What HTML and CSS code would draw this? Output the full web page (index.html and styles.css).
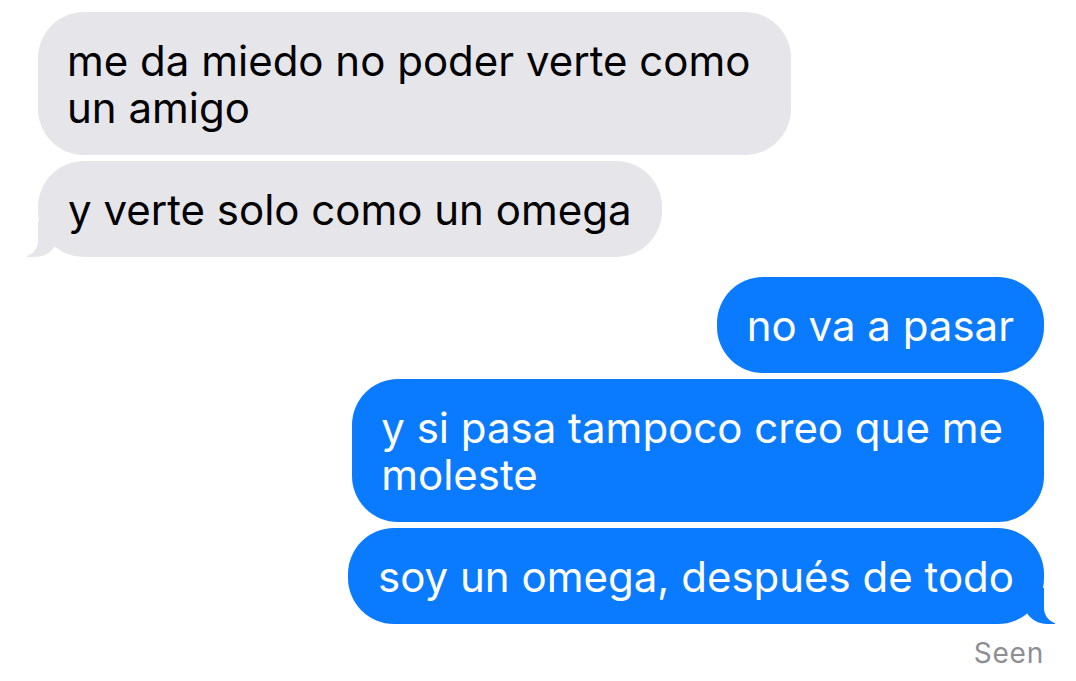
FILE: index.html
```html
<!DOCTYPE html>
<html lang="es">
<head>
  <meta charset="UTF-8" />
  <meta name="viewport" content="width=device-width, initial-scale=1.0" />
  <title>Mensajes</title>
  <link rel="stylesheet" href="styles.css">
</head>
<body>
  <div class="chat">
    <div class="group them">
      <div class="bubble wrapped">me da miedo no poder verte como<br>un amigo</div>
      <div class="bubble tail">y verte solo como un omega</div>
    </div>

    <div class="group me">
      <div class="bubble">no va a pasar</div>
      <div class="bubble wrapped">y si pasa tampoco creo que me<br>moleste</div>
      <div class="bubble tail">soy un omega, después de todo</div>
      <div class="seen">Seen</div>
    </div>
  </div>
</body>
</html>
```

FILE: styles.css
```css
* {
  box-sizing: border-box;
}

body {
  margin: 0;
  background: #fff;
  font-family: Inter, 'Noto Sans', sans-serif;
}

.chat {
  display: flex;
  flex-direction: column;
  gap: 20px;
  padding: 12px 32px 0 38px;
}

.group {
  display: flex;
  flex-direction: column;
  gap: 6px;
}

.them {
  align-items: flex-start;
}

.me {
  align-items: flex-end;
}

.bubble {
  position: relative;
  padding: 25px 30px 24px;
  font-size: 42px;
  line-height: 47px;
  border-radius: 46px;
  white-space: nowrap;
}

.bubble.wrapped {
  padding-left: 29px;
  padding-right: 41px;
}

.them .bubble {
  background: #e5e5ea;
  color: #000;
}

.me .bubble {
  background: #0a7bff;
  color: #fff;
}

/* iMessage style tail */
.bubble.tail::before,
.bubble.tail::after {
  content: '';
  position: absolute;
  bottom: 0;
  height: 36px;
}

.them .bubble.tail::before {
  left: -11px;
  width: 32px;
  background: #e5e5ea;
  border-bottom-right-radius: 24px;
}

.them .bubble.tail::after {
  left: -26px;
  width: 26px;
  background: #fff;
  border-bottom-right-radius: 16px;
}

.me .bubble.tail::before {
  right: -11px;
  width: 32px;
  background: #0a7bff;
  border-bottom-left-radius: 24px;
}

.me .bubble.tail::after {
  right: -26px;
  width: 26px;
  background: #fff;
  border-bottom-left-radius: 16px;
}

.seen {
  margin-top: 6px;
  font-size: 28px;
  line-height: 34px;
  letter-spacing: 0.8px;
  color: #8e8e93;
}
```
